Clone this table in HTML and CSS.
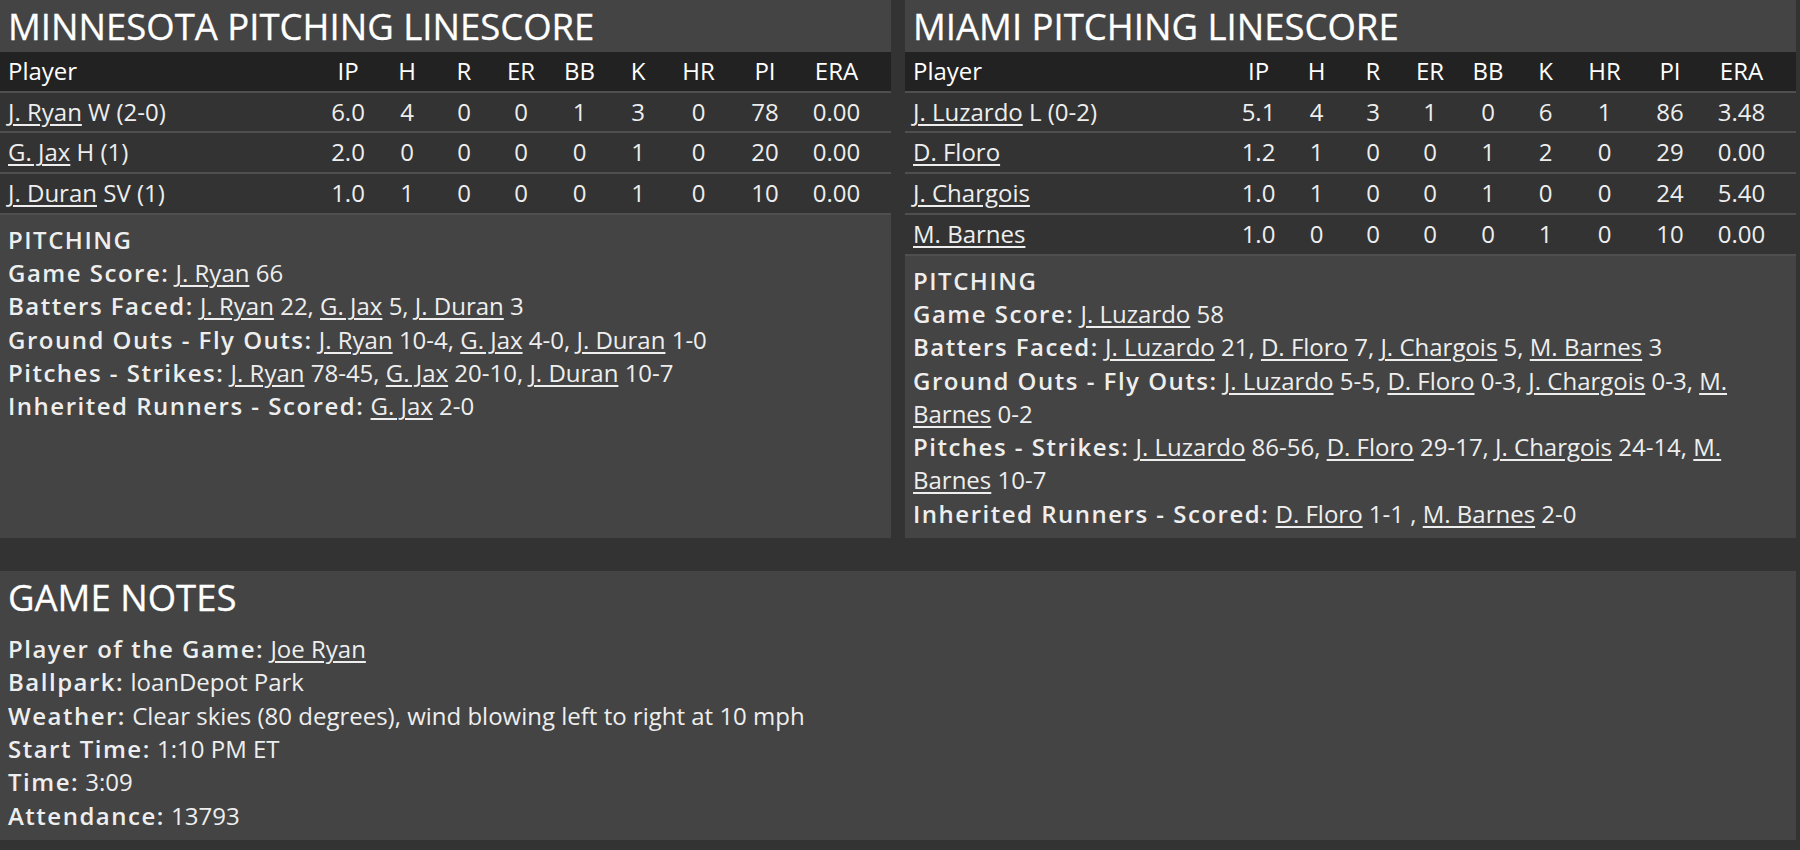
FILE: index.html
```html
<!DOCTYPE html>
<html lang="en">
<head>
<meta charset="utf-8">
<title>Pitching Linescore</title>
<link rel="stylesheet" href="styles.css">
</head>
<body>
<div class="page">
  <div class="linescores">
    <section class="panel">
      <h2 class="panel-title">MINNESOTA PITCHING LINESCORE</h2>
      <table class="pitch-table pitch-table--home">
        <colgroup>
          <col class="col-player"><col class="col-ip"><col class="col-h"><col class="col-r"><col class="col-er"><col class="col-bb"><col class="col-k"><col class="col-hr"><col class="col-pi"><col class="col-era">
        </colgroup>
        <thead>
          <tr><th class="player">Player</th><th>IP</th><th>H</th><th>R</th><th>ER</th><th>BB</th><th>K</th><th>HR</th><th>PI</th><th class="era">ERA</th></tr>
        </thead>
        <tbody>
          <tr><td class="player"><a href="#">J. Ryan</a> W (2-0)</td><td>6.0</td><td>4</td><td>0</td><td>0</td><td>1</td><td>3</td><td>0</td><td>78</td><td class="era">0.00</td></tr>
          <tr><td class="player"><a href="#">G. Jax</a> H (1)</td><td>2.0</td><td>0</td><td>0</td><td>0</td><td>0</td><td>1</td><td>0</td><td>20</td><td class="era">0.00</td></tr>
          <tr><td class="player"><a href="#">J. Duran</a> SV (1)</td><td>1.0</td><td>1</td><td>0</td><td>0</td><td>0</td><td>1</td><td>0</td><td>10</td><td class="era">0.00</td></tr>
        </tbody>
      </table>
      <div class="notes">
        <div class="notes-heading">PITCHING</div>
        <div class="note"><span class="label">Game Score:</span> <a href="#">J. Ryan</a> 66</div>
        <div class="note"><span class="label">Batters Faced:</span> <a href="#">J. Ryan</a> 22, <a href="#">G. Jax</a> 5, <a href="#">J. Duran</a> 3</div>
        <div class="note"><span class="label">Ground Outs - Fly Outs:</span> <a href="#">J. Ryan</a> 10-4, <a href="#">G. Jax</a> 4-0, <a href="#">J. Duran</a> 1-0</div>
        <div class="note"><span class="label">Pitches - Strikes:</span> <a href="#">J. Ryan</a> 78-45, <a href="#">G. Jax</a> 20-10, <a href="#">J. Duran</a> 10-7</div>
        <div class="note"><span class="label">Inherited Runners - Scored:</span> <a href="#">G. Jax</a> 2-0</div>
      </div>
    </section>

    <section class="panel">
      <h2 class="panel-title">MIAMI PITCHING LINESCORE</h2>
      <table class="pitch-table pitch-table--away">
        <colgroup>
          <col class="col-player"><col class="col-ip"><col class="col-h"><col class="col-r"><col class="col-er"><col class="col-bb"><col class="col-k"><col class="col-hr"><col class="col-pi"><col class="col-era">
        </colgroup>
        <thead>
          <tr><th class="player">Player</th><th>IP</th><th>H</th><th>R</th><th>ER</th><th>BB</th><th>K</th><th>HR</th><th>PI</th><th class="era">ERA</th></tr>
        </thead>
        <tbody>
          <tr><td class="player"><a href="#">J. Luzardo</a> L (0-2)</td><td>5.1</td><td>4</td><td>3</td><td>1</td><td>0</td><td>6</td><td>1</td><td>86</td><td class="era">3.48</td></tr>
          <tr><td class="player"><a href="#">D. Floro</a></td><td>1.2</td><td>1</td><td>0</td><td>0</td><td>1</td><td>2</td><td>0</td><td>29</td><td class="era">0.00</td></tr>
          <tr><td class="player"><a href="#">J. Chargois</a></td><td>1.0</td><td>1</td><td>0</td><td>0</td><td>1</td><td>0</td><td>0</td><td>24</td><td class="era">5.40</td></tr>
          <tr><td class="player"><a href="#">M. Barnes</a></td><td>1.0</td><td>0</td><td>0</td><td>0</td><td>0</td><td>1</td><td>0</td><td>10</td><td class="era">0.00</td></tr>
        </tbody>
      </table>
      <div class="notes">
        <div class="notes-heading">PITCHING</div>
        <div class="note"><span class="label">Game Score:</span> <a href="#">J. Luzardo</a> 58</div>
        <div class="note"><span class="label">Batters Faced:</span> <a href="#">J. Luzardo</a> 21, <a href="#">D. Floro</a> 7, <a href="#">J. Chargois</a> 5, <a href="#">M. Barnes</a> 3</div>
        <div class="note"><span class="label">Ground Outs - Fly Outs:</span> <a href="#">J. Luzardo</a> 5-5, <a href="#">D. Floro</a> 0-3, <a href="#">J. Chargois</a> 0-3, <a href="#">M.</a> <a href="#">Barnes</a> 0-2</div>
        <div class="note"><span class="label">Pitches - Strikes:</span> <a href="#">J. Luzardo</a> 86-56, <a href="#">D. Floro</a> 29-17, <a href="#">J. Chargois</a> 24-14, <a href="#">M.</a> <a href="#">Barnes</a> 10-7</div>
        <div class="note"><span class="label">Inherited Runners - Scored:</span> <a href="#">D. Floro</a> 1-1 , <a href="#">M. Barnes</a> 2-0</div>
      </div>
    </section>
  </div>

  <section class="panel game-notes">
    <h2 class="panel-title">GAME NOTES</h2>
    <div class="notes">
      <div class="note"><span class="label">Player of the Game:</span> <a href="#">Joe Ryan</a></div>
      <div class="note"><span class="label">Ballpark:</span> loanDepot Park</div>
      <div class="note"><span class="label">Weather:</span> Clear skies (80 degrees), wind blowing left to right at 10 mph</div>
      <div class="note"><span class="label">Start Time:</span> 1:10 PM ET</div>
      <div class="note"><span class="label">Time:</span> 3:09</div>
      <div class="note"><span class="label">Attendance:</span> 13793</div>
    </div>
  </section>
</div>
</body>
</html>
```
FILE: styles.css
```css
html, body {
  margin: 0;
  padding: 0;
  background: #333333;
}

body {
  font-family: "Open Sans", "Noto Sans", sans-serif;
  font-size: 24px;
  color: #eeeeee;
}

.page {
  width: 1796px;
}

.linescores {
  display: grid;
  grid-template-columns: 891px 891px;
  column-gap: 14px;
  align-items: stretch;
}

.panel {
  background: #444444;
}

.panel-title {
  margin: 0;
  padding: 0 8px;
  font-size: 36.5px;
  font-weight: 400;
  line-height: 52px;
  color: #ffffff;
  white-space: nowrap;
  -webkit-text-stroke: 0.3px #ffffff;
}

a {
  color: inherit;
  text-decoration: underline;
  text-underline-offset: 3px;
  text-decoration-thickness: 2px;
}

.pitch-table {
  width: 100%;
  border-collapse: collapse;
  table-layout: fixed;
}

.pitch-table th,
.pitch-table td {
  padding: 0;
  height: 38.7px;
  line-height: 38.7px;
  text-align: center;
  font-weight: 400;
  white-space: nowrap;
  border-bottom: 2px solid #4f4f4f;
}

.pitch-table thead tr {
  background: #222222;
  color: #ffffff;
}

.pitch-table tbody tr {
  background: #333333;
}

.pitch-table .player {
  text-align: left;
  padding-left: 8px;
}

.pitch-table .era {
  padding-right: 18px;
}

.pitch-table--home .col-ip { width: 60px; }
.pitch-table--home .col-h { width: 58px; }
.pitch-table--home .col-r { width: 56px; }
.pitch-table--home .col-er { width: 58px; }
.pitch-table--home .col-bb { width: 59px; }
.pitch-table--home .col-k { width: 58px; }
.pitch-table--home .col-hr { width: 63px; }
.pitch-table--home .col-pi { width: 70px; }
.pitch-table--home .col-era { width: 91px; }

.pitch-table--away .col-ip { width: 59px; }
.pitch-table--away .col-h { width: 57px; }
.pitch-table--away .col-r { width: 56px; }
.pitch-table--away .col-er { width: 58px; }
.pitch-table--away .col-bb { width: 58px; }
.pitch-table--away .col-k { width: 57px; }
.pitch-table--away .col-hr { width: 61px; }
.pitch-table--away .col-pi { width: 70px; }
.pitch-table--away .col-era { width: 91px; }

.notes {
  padding: 8px;
  line-height: 33.33px;
}

.notes-heading,
.label {
  font-weight: 600;
  letter-spacing: 1.5px;
}

.game-notes {
  margin-top: 33px;
}

.game-notes .notes {
  padding-top: 9px;
}
```
